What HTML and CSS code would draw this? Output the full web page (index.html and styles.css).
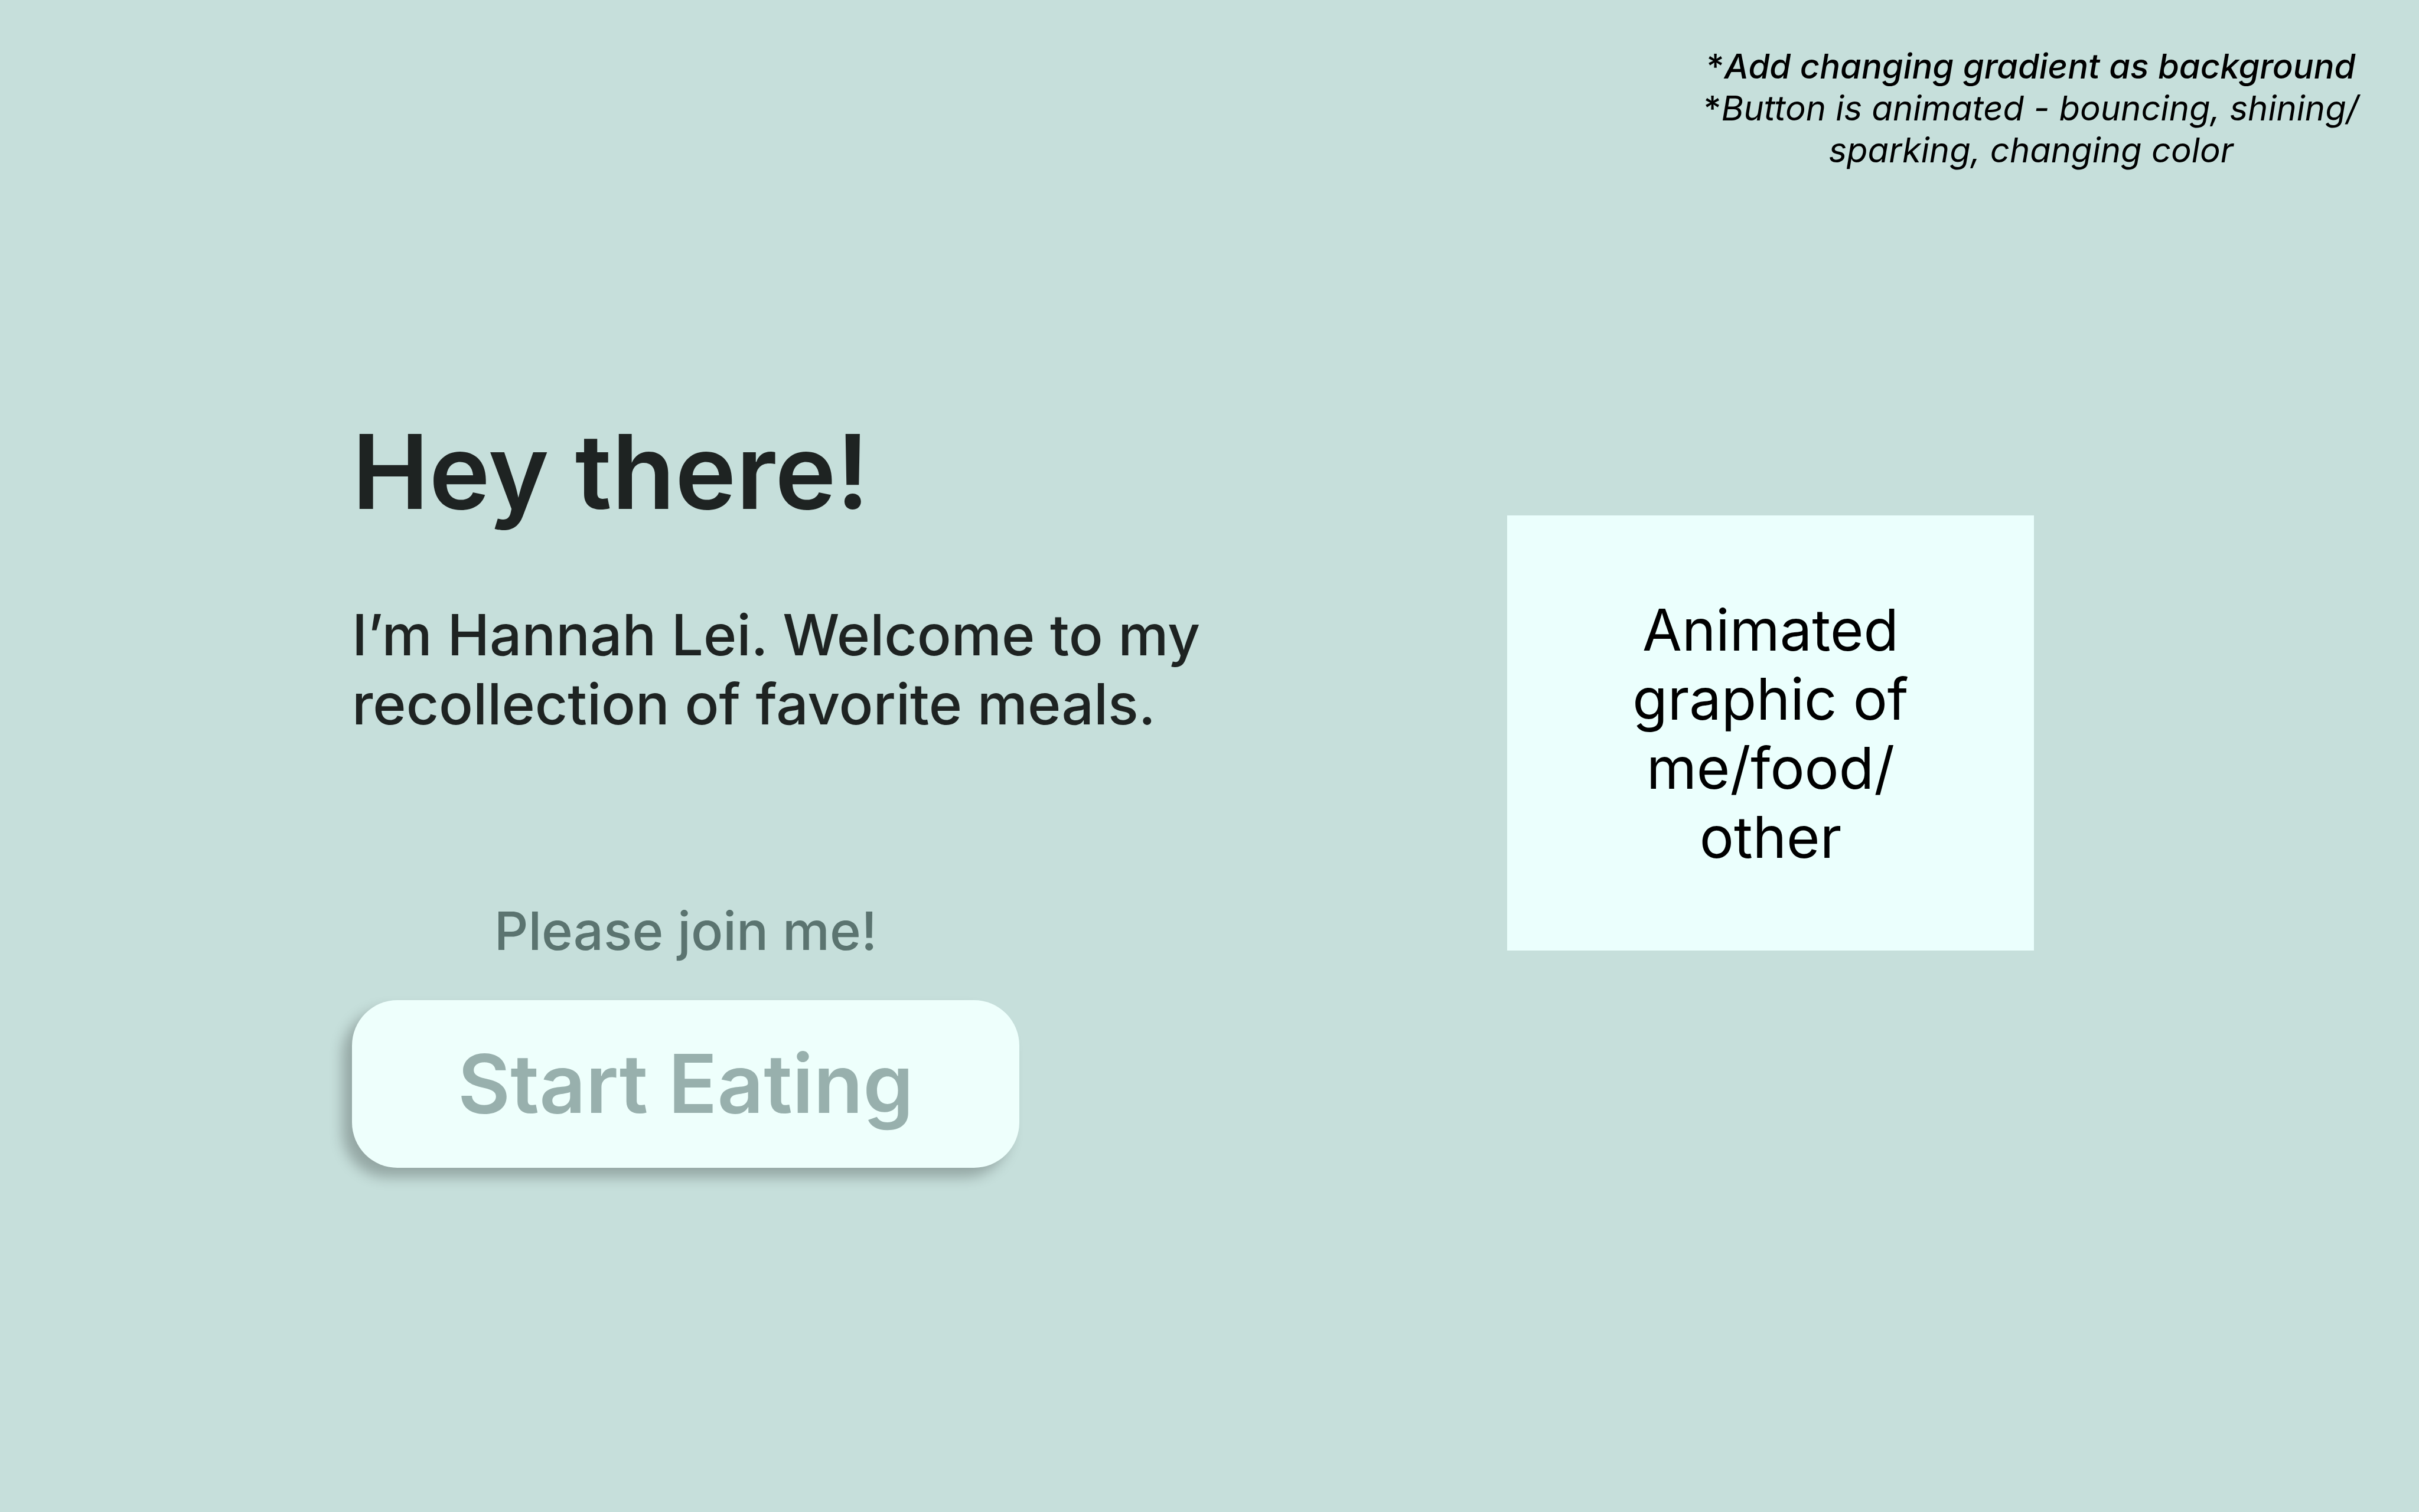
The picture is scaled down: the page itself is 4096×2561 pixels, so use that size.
FILE: index.html
```html
<!DOCTYPE html>
<html lang="en">
<head>
<meta charset="utf-8">
<title>Hannah Lei</title>
<link rel="stylesheet" href="styles.css">
</head>
<body>
<header class="notes">
  <p class="notes-text"><span class="strong"><span class="star">*</span>Add changing gradient as background</span><br><span class="star">*</span>Button is animated - bouncing, shining/<br>sparking, changing color</p>
</header>
<main class="hero">
  <section class="intro">
    <h1 class="title">Hey there!</h1>
    <p class="lead">I’m Hannah Lei. Welcome to my<br>recollection of favorite meals.</p>
    <div class="cta">
      <p class="invite">Please join me!</p>
      <button class="start" type="button">Start Eating</button>
    </div>
  </section>
  <aside class="graphic">
    <p class="graphic-text">Animated<br>graphic of<br>me/food/<br>other</p>
  </aside>
</main>
</body>
</html>
```
FILE: styles.css
```css
* {
  box-sizing: border-box;
}

body {
  margin: 0;
  min-height: 100vh;
  background: #c6dfdb;
  color: #000;
  font-family: Inter, "Liberation Sans", sans-serif;
  font-optical-sizing: none;
}

h1,
p {
  margin: 0;
}

.notes {
  display: flex;
  justify-content: flex-end;
  padding: 77px 97px 0 0;
}

.notes-text {
  width: 1120px;
  font-size: 58px;
  line-height: 71px;
  font-style: italic;
  text-align: center;
  white-space: nowrap;
}

.strong {
  font-weight: 500;
}

.star {
  font-style: normal;
  font-weight: 500;
}

.hero {
  display: flex;
  justify-content: space-between;
  align-items: flex-start;
  padding: 403px 652px 0 596px;
}

.intro {
  color: #1e2322;
}

.title {
  font-size: 175px;
  line-height: 210px;
  font-weight: 600;
}

.lead {
  margin-top: 114px;
  font-size: 96px;
  line-height: 117px;
  font-weight: 500;
}

.cta {
  display: flex;
  flex-direction: column;
  align-items: center;
  gap: 62px;
  width: 1130px;
  margin-top: 271px;
}

.invite {
  color: #5b7470;
  font-size: 90px;
  line-height: 110px;
  font-weight: 500;
}

.start {
  width: 100%;
  padding: 59px 0 61px;
  border: 0;
  border-radius: 77px;
  background: #eefffc;
  box-shadow: -16px 16px 22px rgba(0, 0, 0, 0.25);
  color: #98b0ad;
  font: inherit;
  font-size: 137px;
  line-height: 164px;
  font-weight: 600;
}

.graphic {
  display: flex;
  align-items: center;
  justify-content: center;
  width: 892px;
  height: 737px;
  margin-top: 180px;
  background: #ebfffd;
}

.graphic-text {
  font-size: 97px;
  line-height: 117px;
  text-align: center;
}
```
